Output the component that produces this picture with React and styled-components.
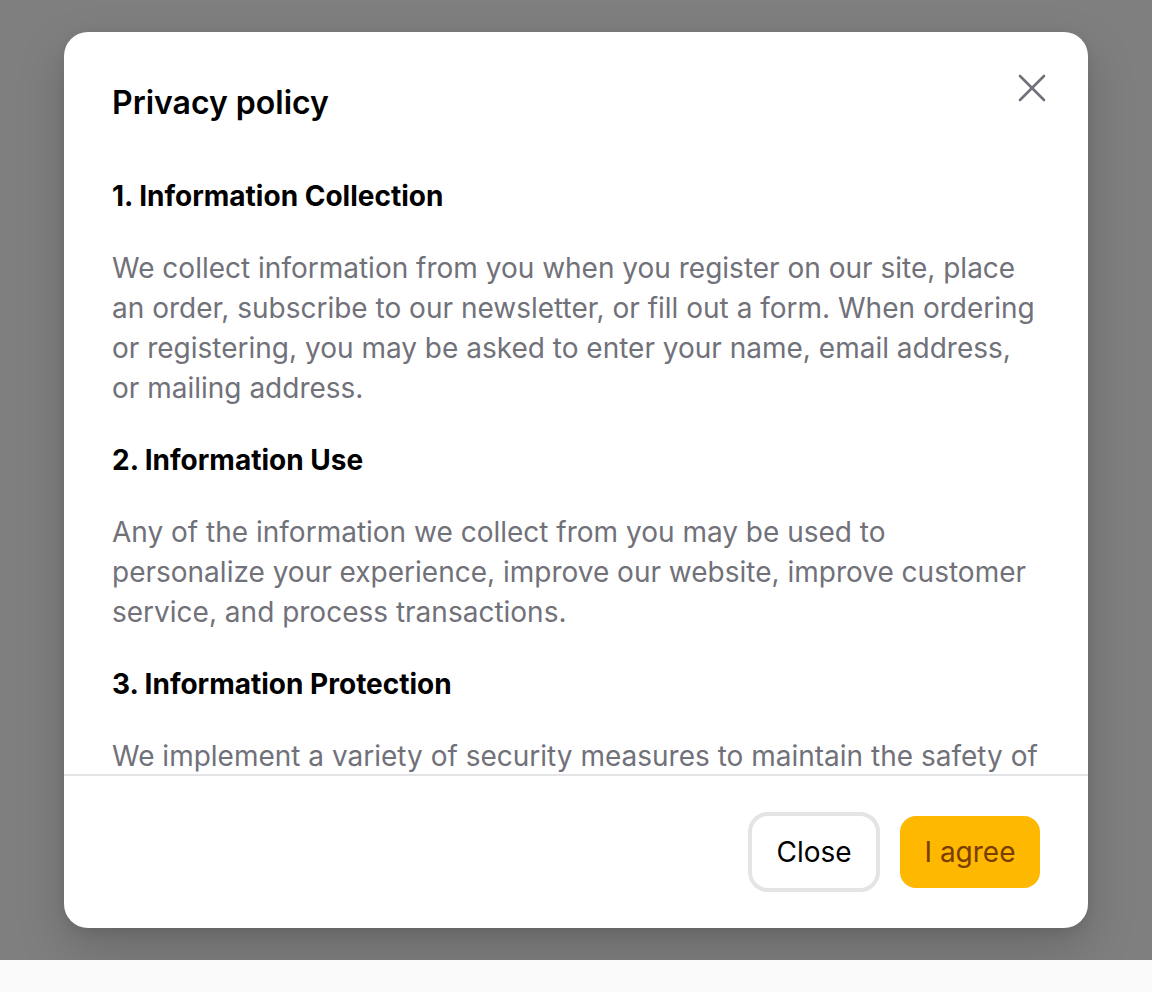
import React from "react";
import styled, { createGlobalStyle } from "styled-components";

const Global = createGlobalStyle`
  html, body { margin: 0; padding: 0; }
  body {
    background: #fafafa;
    font-family: Inter, "Noto Sans", Arial, sans-serif;
    -webkit-font-smoothing: antialiased;
  }
`;

const Backdrop = styled.div`
  height: 960px;
  background: #7f7f7f;
  padding-top: 32px;
  box-sizing: border-box;
`;

const Modal = styled.section`
  position: relative;
  width: 1024px;
  height: 896px;
  margin: 0 auto;
  background: #ffffff;
  border-radius: 24px;
  overflow: hidden;
  display: flex;
  flex-direction: column;
  box-shadow: 0 20px 50px rgba(0, 0, 0, 0.18), 0 4px 12px rgba(0, 0, 0, 0.08);
`;

const Header = styled.header`
  padding: 51px 48px 0;
`;

const Title = styled.h2`
  margin: 0;
  font-size: 32px;
  line-height: 40px;
  font-weight: 600;
  color: #000000;
`;

const CloseIcon = styled.button`
  position: absolute;
  top: 32px;
  right: 32px;
  width: 48px;
  height: 48px;
  border: none;
  background: transparent;
  padding: 0;
  display: flex;
  align-items: center;
  justify-content: center;
  color: #71717a;
  cursor: pointer;
`;

const Body = styled.div`
  flex: 1;
  min-height: 0;
  overflow-y: auto;
  scrollbar-width: none;
  padding: 53px 48px 0;
  display: flex;
  flex-direction: column;
  gap: 32px;
`;

const Heading = styled.h3`
  margin: 0;
  font-size: 28px;
  line-height: 40px;
  font-weight: 700;
  color: #000000;
`;

const Paragraph = styled.p`
  margin: 0;
  font-size: 28px;
  line-height: 40px;
  font-weight: 400;
  color: #71717a;
`;

const Footer = styled.footer`
  flex: none;
  border-top: 2px solid #e4e4e7;
  height: 154px;
  box-sizing: border-box;
  padding: 0 48px;
  display: flex;
  align-items: center;
  justify-content: flex-end;
  gap: 20px;
`;

const Button = styled.button`
  font-family: inherit;
  font-size: 28px;
  font-weight: 400;
  cursor: pointer;
  box-sizing: border-box;
  display: inline-flex;
  align-items: center;
  justify-content: center;
  height: ${(p) => (p.$primary ? "72px" : "80px")};
  padding: 0 20px;
  border-radius: ${(p) => (p.$primary ? "16px" : "20px")};
  border: ${(p) => (p.$primary ? "none" : "4px solid #e4e4e7")};
  background: ${(p) => (p.$primary ? "#ffb800" : "#ffffff")};
  color: ${(p) => (p.$primary ? "#7a3d00" : "#000000")};
  min-width: ${(p) => (p.$primary ? "140px" : "132px")};
`;

const sections = [
  {
    h: "1. Information Collection",
    p: "We collect information from you when you register on our site, place an order, subscribe to our newsletter, or fill out a form. When ordering or registering, you may be asked to enter your name, email address, or mailing address.",
  },
  {
    h: "2. Information Use",
    p: "Any of the information we collect from you may be used to personalize your experience, improve our website, improve customer service, and process transactions.",
  },
  {
    h: "3. Information Protection",
    p: "We implement a variety of security measures to maintain the safety of your personal information.",
  },
];

export default function App() {
  return (
    <>
      <Global />
      <Backdrop>
        <Modal role="dialog" aria-label="Privacy policy">
          <Header>
            <Title>Privacy policy</Title>
          </Header>
          <CloseIcon aria-label="Close">
            <svg width="28" height="28" viewBox="0 0 28 28" fill="none">
              <path d="M2 2L26 26M26 2L2 26" stroke="currentColor" strokeWidth="2.6" strokeLinecap="round" />
            </svg>
          </CloseIcon>
          <Body>
            {sections.map((s) => (
              <React.Fragment key={s.h}>
                <Heading>{s.h}</Heading>
                <Paragraph>{s.p}</Paragraph>
              </React.Fragment>
            ))}
          </Body>
          <Footer>
            <Button>Close</Button>
            <Button $primary>I agree</Button>
          </Footer>
        </Modal>
      </Backdrop>
    </>
  );
}
